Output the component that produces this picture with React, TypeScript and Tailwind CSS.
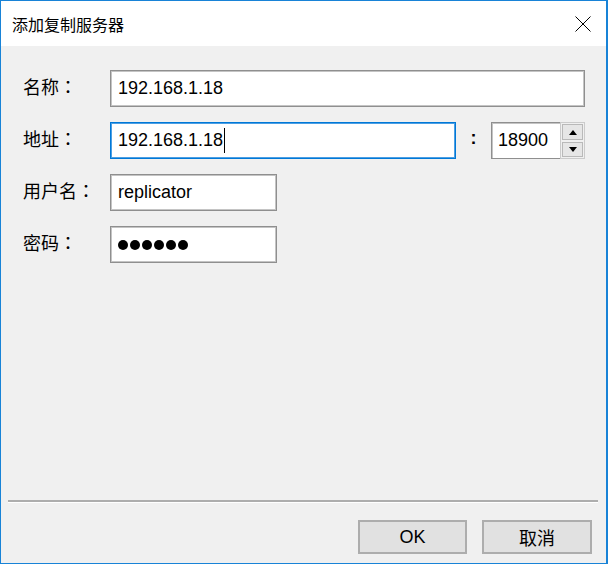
import React from "react";

const cjk = { fontFamily: '"Noto Sans CJK SC", "Liberation Sans", sans-serif' };
const latin = { fontFamily: '"Liberation Sans", "Noto Sans CJK SC", sans-serif' };

function Label({ text }: { text: string }) {
  return (
    <div className="w-[87px] shrink-0 flex items-center pb-[5px] text-[18px] leading-none text-black" style={cjk}>
      <span>{text}</span>
      <span style={{ fontFamily: '"Noto Sans CJK TC", sans-serif' }}>：</span>
    </div>
  );
}

function Tri({ up }: { up: boolean }) {
  return (
    <svg width="8" height="5" viewBox="0 0 8 5">
      {up ? <polygon points="0,5 8,5 4,0" fill="#000" /> : <polygon points="0,0 8,0 4,5" fill="#000" />}
    </svg>
  );
}

export default function App() {
  const box =
    "h-[37px] bg-white border border-[#8f8f8f] shadow-[inset_0_0_0_1px_#c4c4c4] flex items-center pl-[7px] text-[18px] text-black";
  return (
    <div className="w-[608px] h-[564px] flex flex-col bg-[#f0f0f0] border-l border-t border-b border-r-2 border-[#1883d7]">
      {/* title bar */}
      <div className="h-[45px] shrink-0 bg-white flex items-center justify-between pl-[11px] pr-[15px]">
        <span className="text-[16px] text-black leading-none" style={cjk}>
          添加复制服务器
        </span>
        <svg width="16" height="16" viewBox="0 0 16 16">
          <line x1="0.5" y1="0.5" x2="15.5" y2="15.5" stroke="#000" strokeWidth="1" />
          <line x1="15.5" y1="0.5" x2="0.5" y2="15.5" stroke="#000" strokeWidth="1" />
        </svg>
      </div>

      {/* form */}
      <div className="flex-1 flex flex-col gap-[15px] pt-[24px] pl-[22px] pr-[21px]">
        <div className="flex items-center">
          <Label text="名称" />
          <div className={box + " flex-1"} style={latin}>
            192.168.1.18
          </div>
        </div>

        <div className="flex items-center">
          <Label text="地址" />
          <div
            className="flex-1 h-[37px] bg-white border border-[#0078d7] shadow-[inset_0_0_0_1px_#4d9fe3] flex items-center pl-[7px] text-[18px] text-black"
            style={latin}
          >
            <span>192.168.1.18</span>
            <span className="w-px h-[25px] bg-black ml-[1px]" />
          </div>
          <div className="w-[35px] flex justify-center pb-[4px] text-[18px] text-black font-bold" style={latin}>
            :
          </div>
          <div className="w-[94px] h-[37px] flex">
            <div
              className="flex-1 bg-white border-y border-l border-[#8f8f8f] shadow-[inset_1px_1px_0_0_#c4c4c4] flex items-center pl-[6px] text-[18px] text-black"
              style={latin}
            >
              18900
            </div>
            <div className="w-[25px] bg-[#f0f0f0] border border-[#cbcbcb] flex flex-col px-[1px] pt-[1px] pb-[1px] gap-[2px]">
              <div className="h-[16px] bg-[#e6e6e6] border border-[#b9b9b9] flex items-center justify-center">
                <Tri up={true} />
              </div>
              <div className="flex-1 bg-[#e6e6e6] border border-[#b9b9b9] flex items-center justify-center">
                <Tri up={false} />
              </div>
            </div>
          </div>
        </div>

        <div className="flex items-center">
          <Label text="用户名" />
          <div className={box + " w-[167px]"} style={latin}>
            replicator
          </div>
        </div>

        <div className="flex items-center">
          <Label text="密码" />
          <div className={box + " w-[167px] gap-[2px]"}>
            {[0, 1, 2, 3, 4, 5].map((i) => (
              <span key={i} className="w-[10px] h-[10px] rounded-full bg-black" />
            ))}
          </div>
        </div>
      </div>

      {/* separator */}
      <div className="ml-[7px] mr-[8px] border-t-2 border-t-[#adadad] border-b border-b-white" />

      {/* footer */}
      <div className="flex justify-end gap-[15px] pt-[17px] pb-[9px] pr-[14px]">
        <button
          className="w-[109px] h-[34px] bg-[#e1e1e1] border-2 border-[#adadad] text-[18px] text-black flex items-center justify-center"
          style={latin}
        >
          OK
        </button>
        <button
          className="w-[110px] h-[34px] bg-[#e1e1e1] border-2 border-[#adadad] text-[18px] text-black flex items-center justify-center"
          style={cjk}
        >
          取消
        </button>
      </div>
    </div>
  );
}
